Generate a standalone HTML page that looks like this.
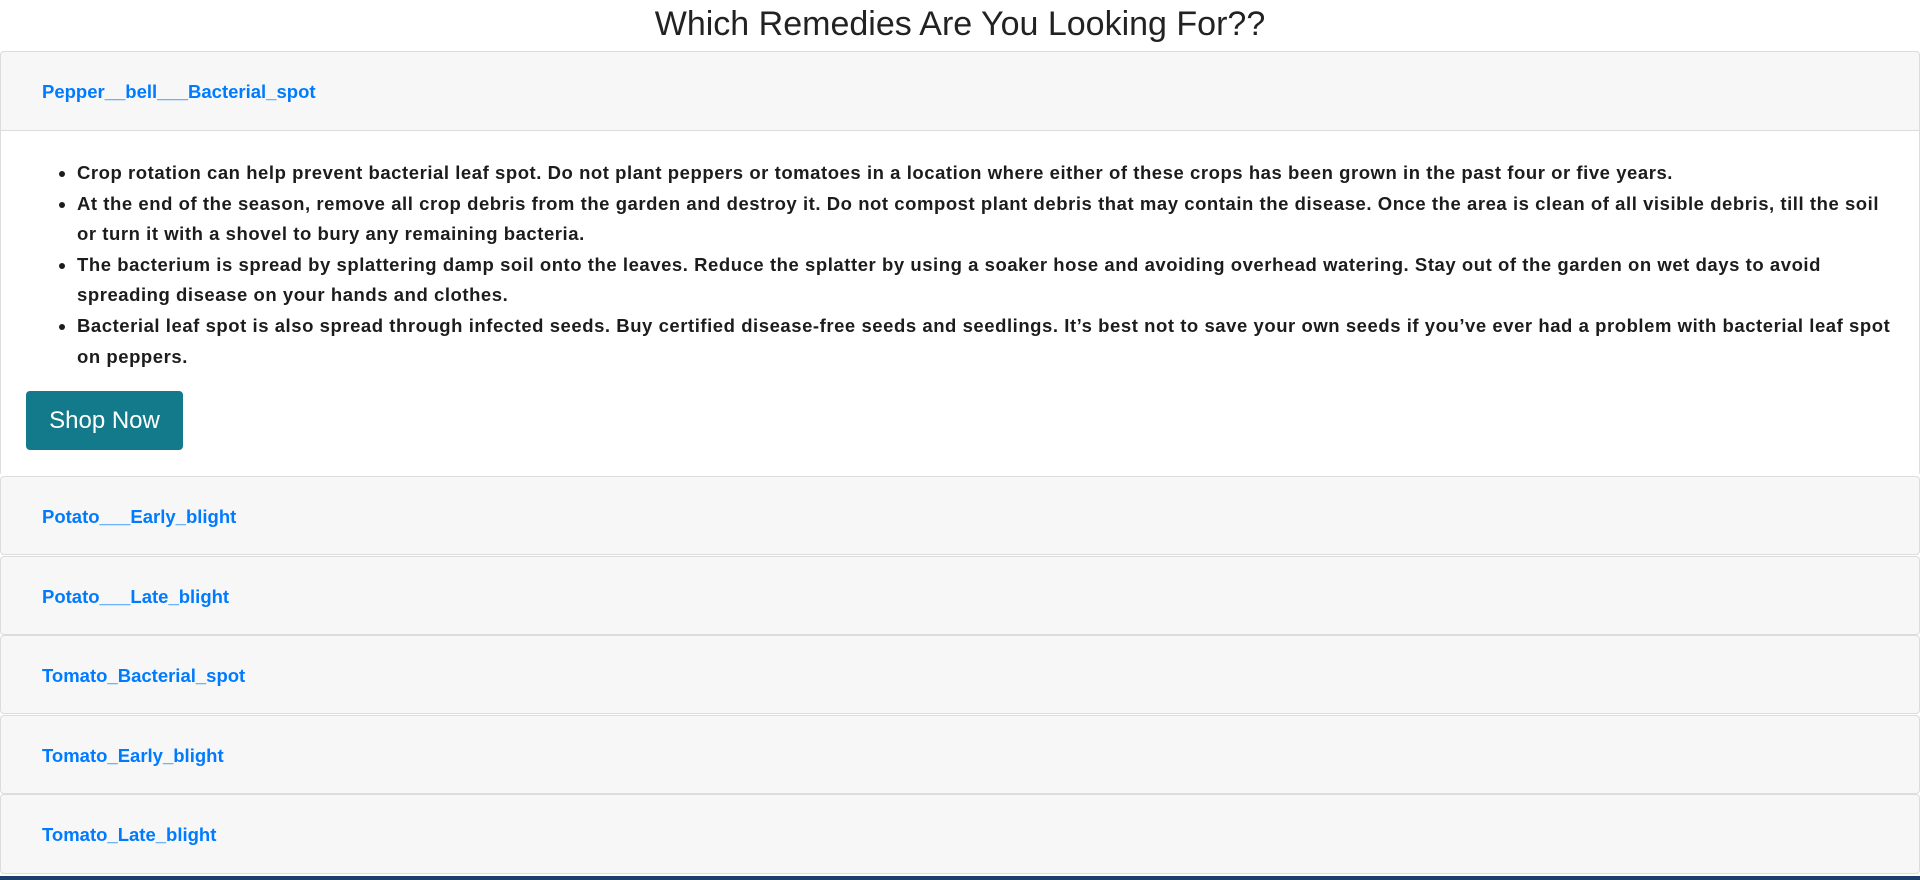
<!DOCTYPE html>
<html><head><meta charset="utf-8"><style>
*{box-sizing:border-box;margin:0;padding:0}
body{width:1920px;height:880px;background:#fff;font-family:"Liberation Sans",sans-serif;position:relative;overflow:hidden}
h2{position:absolute;top:1px;left:0;width:1920px;text-align:center;font-weight:normal;font-size:34px;line-height:46px;color:#222}
.card{position:absolute;left:0;width:1920px;border:1px solid #dcdcdc;border-radius:4px;background:#f7f7f7}
.hd{height:78px;line-height:80px;padding-left:41px;color:#007bff;font-weight:bold;font-size:18.5px}
.body{background:#fff;border-top:1px solid #dcdcdc;height:347px;position:relative}
ul{position:absolute;left:76px;top:27px;font-weight:bold;font-size:18.5px;letter-spacing:0.55px;line-height:30.6px;color:#1c1c1c}
li{white-space:nowrap}
.btn{position:absolute;left:25px;top:260px;width:157px;height:59px;background:#127a8a;border-radius:4px;color:#fff;font-size:24px;line-height:59px;text-align:center}
.bar{position:absolute;left:0;top:876px;width:1920px;height:4px;background:#1d3d6e}
</style></head><body>
<h2>Which Remedies Are You Looking For??</h2>
<div class="card" style="top:51px;height:425px;background:#f7f7f7">
<div class="hd">Pepper__bell___Bacterial_spot</div>
<div class="body">
<ul>
<li>Crop rotation can help prevent bacterial leaf spot. Do not plant peppers or tomatoes in a location where either of these crops has been grown in the past four or five years.</li>
<li>At the end of the season, remove all crop debris from the garden and destroy it. Do not compost plant debris that may contain the disease. Once the area is clean of all visible debris, till the soil<br>or turn it with a shovel to bury any remaining bacteria.</li>
<li>The bacterium is spread by splattering damp soil onto the leaves. Reduce the splatter by using a soaker hose and avoiding overhead watering. Stay out of the garden on wet days to avoid<br>spreading disease on your hands and clothes.</li>
<li>Bacterial leaf spot is also spread through infected seeds. Buy certified disease-free seeds and seedlings. It’s best not to save your own seeds if you’ve ever had a problem with bacterial leaf spot<br>on peppers.</li>
</ul>
<div class="btn">Shop Now</div>
</div></div>
<div class="card" style="top:476px;height:79px"><div class="hd">Potato___Early_blight</div></div>
<div class="card" style="top:556px;height:79px"><div class="hd">Potato___Late_blight</div></div>
<div class="card" style="top:635px;height:79px"><div class="hd">Tomato_Bacterial_spot</div></div>
<div class="card" style="top:715px;height:79px"><div class="hd">Tomato_Early_blight</div></div>
<div class="card" style="top:794px;height:80px"><div class="hd">Tomato_Late_blight</div></div>
<div class="bar"></div>
</body></html>
